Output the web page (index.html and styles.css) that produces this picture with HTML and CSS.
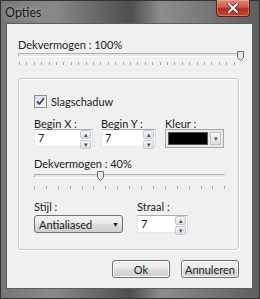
FILE: index.html
```html
<!DOCTYPE html>
<html lang="nl">
<head>
    <meta charset="UTF-8">
    <title>Opties</title>
    <link rel="stylesheet" href="styles.css">
</head>
<body>
    <div class="window">
        <div class="titlebar">
            <span class="title">Opties</span>
            <div class="close">
                <svg width="12" height="10" viewBox="0 0 12 10">
                    <path d="M2 1 L10 9 M10 1 L2 9" stroke="#5a1a14" stroke-width="3.2" stroke-linecap="square"/>
                    <path d="M2 1 L10 9 M10 1 L2 9" stroke="#ffffff" stroke-width="2" stroke-linecap="square"/>
                </svg>
            </div>
        </div>

        <div class="client">
            <div class="label">Dekvermogen : 100%</div>
            <div class="slider">
                <div class="track"></div>
                <svg class="thumb" style="left: 219px" width="7" height="10" viewBox="0 0 7 10">
                    <path d="M0.5 0.5 H6.5 V6.5 L3.5 9.5 L0.5 6.5 Z" fill="#e8e8e8" stroke="#6d6d6d"/>
                </svg>
            </div>
            <div class="ticks wide-ticks"></div>

            <div class="group">
                <div class="check">
                    <span class="checkbox">
                        <svg width="11" height="11" viewBox="0 0 11 11">
                            <path d="M2 5.5 L4.5 8 L9 2" fill="none" stroke="#2a4a7a" stroke-width="1.8"/>
                        </svg>
                    </span>
                    <span>Slagschaduw</span>
                </div>

                <div class="row-begin">
                    <div class="field">
                        <div class="label">Begin X :</div>
                        <div class="spin">
                            <span class="value">7</span>
                            <span class="spin-btns">
                                <span class="spin-btn">&#9652;</span>
                                <span class="spin-btn">&#9662;</span>
                            </span>
                        </div>
                    </div>
                    <div class="field">
                        <div class="label">Begin Y :</div>
                        <div class="spin">
                            <span class="value">7</span>
                            <span class="spin-btns">
                                <span class="spin-btn">&#9652;</span>
                                <span class="spin-btn">&#9662;</span>
                            </span>
                        </div>
                    </div>
                    <div class="field">
                        <div class="label">Kleur :</div>
                        <div class="color-pick">
                            <span class="swatch"></span>
                            <span class="color-btn">&#9662;</span>
                        </div>
                    </div>
                </div>

                <div class="label opacity-label">Dekvermogen : 40%</div>
                <div class="slider inner-slider">
                    <div class="track"></div>
                    <svg class="thumb" style="left: 63px" width="7" height="10" viewBox="0 0 7 10">
                        <path d="M0.5 0.5 H6.5 V6.5 L3.5 9.5 L0.5 6.5 Z" fill="#e8e8e8" stroke="#6d6d6d"/>
                    </svg>
                </div>
                <div class="ticks inner-ticks"></div>

                <div class="row-style">
                    <div class="field">
                        <div class="label">Stijl :</div>
                        <div class="combo">
                            <span>Antialiased</span>
                            <span class="combo-arrow">&#9660;</span>
                        </div>
                    </div>
                    <div class="field">
                        <div class="label">Straal :</div>
                        <div class="spin">
                            <span class="value">7</span>
                            <span class="spin-btns">
                                <span class="spin-btn">&#9652;</span>
                                <span class="spin-btn">&#9662;</span>
                            </span>
                        </div>
                    </div>
                </div>
            </div>

            <div class="buttons">
                <div class="button ok">Ok</div>
                <div class="button">Annuleren</div>
            </div>
        </div>
    </div>
</body>
</html>
```

FILE: styles.css
```css
* {
    box-sizing: border-box;
}
body {
    margin: 0;
    font-family: 'Lato', 'Open Sans', sans-serif;
    font-size: 11px;
    color: #1c1c1c;
    background-color: #3a3a3a;
}
.window {
    width: 260px;
    height: 299px;
    display: flex;
    flex-direction: column;
    padding: 0 6px 9px 5px;
    border: 1px solid #333;
    background: linear-gradient(90deg, #767676 0%, #8a8a8a 20%, #666 38%, #4e4e4e 50%, #8c8c8c 62%, #777 80%, #5e5e5e 100%);
}
.titlebar {
    height: 22px;
    display: flex;
    justify-content: space-between;
    align-items: flex-start;
}
.title {
    margin-top: 4px;
    margin-left: -1px;
    font-size: 12.5px;
    color: #1a1a1a;
    text-shadow: 0 0 6px rgba(255, 255, 255, 0.6);
}
.close {
    width: 34px;
    height: 17px;
    margin-top: -1px;
    margin-right: 3px;
    display: flex;
    align-items: center;
    justify-content: center;
    border: 1px solid #5b1d16;
    border-top: none;
    border-radius: 0 0 4px 4px;
    background: linear-gradient(#e08a7c 0%, #c9574a 45%, #b02c1c 55%, #c24a34 100%);
    box-shadow: inset 0 0 0 1px rgba(255, 200, 190, 0.35);
}
.client {
    flex: 1;
    background-color: #f0f0f0;
    border: 1px solid #5c5c5c;
    padding: 14px 13px 0 11px;
}
.label {
    line-height: 13px;
    white-space: nowrap;
}
.slider {
    position: relative;
    height: 10px;
}
.track {
    position: absolute;
    left: 0;
    right: 0;
    top: 2px;
    height: 4px;
    border: 1px solid #b0b0b0;
    border-right-color: #e0e0e0;
    border-bottom-color: #ffffff;
    background-color: #e6e6e6;
}
.thumb {
    position: absolute;
    top: 0;
}
.ticks {
    height: 3px;
    margin-top: 1px;
    background: repeating-linear-gradient(90deg, #a4a4a4 0, #a4a4a4 1px, transparent 1px, transparent 7.4px);
}
.wide-ticks {
    margin-left: 1px;
    margin-right: 2px;
}
.group {
    margin-top: 13px;
    height: 172px;
    border: 1px solid #c9cdd0;
    border-radius: 3px;
    box-shadow: inset 1px 1px 0 #ffffff, 1px 1px 0 #ffffff;
    padding: 16px 0 0 15px;
}
.check {
    display: flex;
    align-items: center;
    height: 13px;
    gap: 4px;
}
.checkbox {
    width: 13px;
    height: 13px;
    border: 1px solid #8e8f8f;
    background: linear-gradient(135deg, #dcdcdc, #fbfbfb);
    display: flex;
    align-items: center;
    justify-content: center;
}
.row-begin {
    display: grid;
    grid-template-columns: 59px 55px 60px;
    column-gap: 8px;
    margin-top: 9px;
}
.row-begin .field:nth-child(3) {
    margin-left: 1px;
}
.row-begin .label {
    margin-bottom: -1px;
}
.spin {
    height: 18px;
    display: flex;
    border: 1px solid #abadb3;
    border-left-color: #e2e3ea;
    border-right-color: #dbdfe6;
    border-bottom-color: #e3e9ef;
    background-color: #fff;
}
.spin .value {
    flex: 1;
    padding-left: 3px;
    line-height: 16px;
}
.spin-btns {
    width: 11px;
    display: flex;
    flex-direction: column;
    gap: 1px;
    margin: 0 1px 0 0;
}
.spin-btn {
    flex: 1;
    display: flex;
    align-items: center;
    justify-content: center;
    font-size: 7px;
    line-height: 1;
    color: #505050;
    border: 1px solid #c3c8ce;
    border-radius: 2px;
    background: linear-gradient(#f2f4f6, #dde2e7);
}
.color-pick {
    height: 19px;
    margin-top: -1px;
    display: flex;
    align-items: stretch;
    padding: 2px;
    gap: 2px;
    border: 1px solid #a7a7a7;
    background-color: #e8e8e8;
}
.swatch {
    flex: 1;
    background-color: #000;
    border: 1px solid #555;
}
.color-btn {
    width: 11px;
    display: flex;
    align-items: center;
    justify-content: center;
    font-size: 7px;
    color: #555;
    border: 1px solid #c2c2c2;
    background: linear-gradient(#f4f4f4, #dedede);
}
.opacity-label {
    margin-top: 9px;
}
.inner-slider {
    width: 191px;
    margin-top: 1px;
}
.inner-slider .track {
    top: 3px;
}
.inner-ticks {
    width: 191px;
    margin-top: 5px;
    background: repeating-linear-gradient(90deg, #acacac 0, #acacac 1px, transparent 1px, transparent 11.9px);
}
.row-style {
    display: flex;
    gap: 14px;
    margin-top: 11px;
    align-items: flex-start;
}
.row-style .field:first-child {
    width: 89px;
}
.row-style .field:last-child {
    width: 51px;
}
.row-style .label {
    margin-bottom: 2px;
}
.combo {
    height: 18px;
    display: flex;
    justify-content: space-between;
    align-items: center;
    padding: 0 3px 0 4px;
    border: 1px solid #707070;
    border-radius: 3px;
    background: linear-gradient(#f2f2f2 0%, #ebebeb 45%, #dddddd 50%, #cfcfcf 100%);
}
.combo-arrow {
    font-size: 7px;
    color: #111;
}
.buttons {
    display: flex;
    justify-content: flex-end;
    gap: 11px;
    margin-top: 10px;
}
.button {
    width: 58px;
    height: 18px;
    display: flex;
    align-items: center;
    justify-content: center;
    border: 1px solid #707070;
    border-radius: 3px;
    background: linear-gradient(#f2f2f2 0%, #ebebeb 45%, #dddddd 50%, #cfcfcf 100%);
    box-shadow: inset 0 0 0 1px #fcfcfc;
}
```
